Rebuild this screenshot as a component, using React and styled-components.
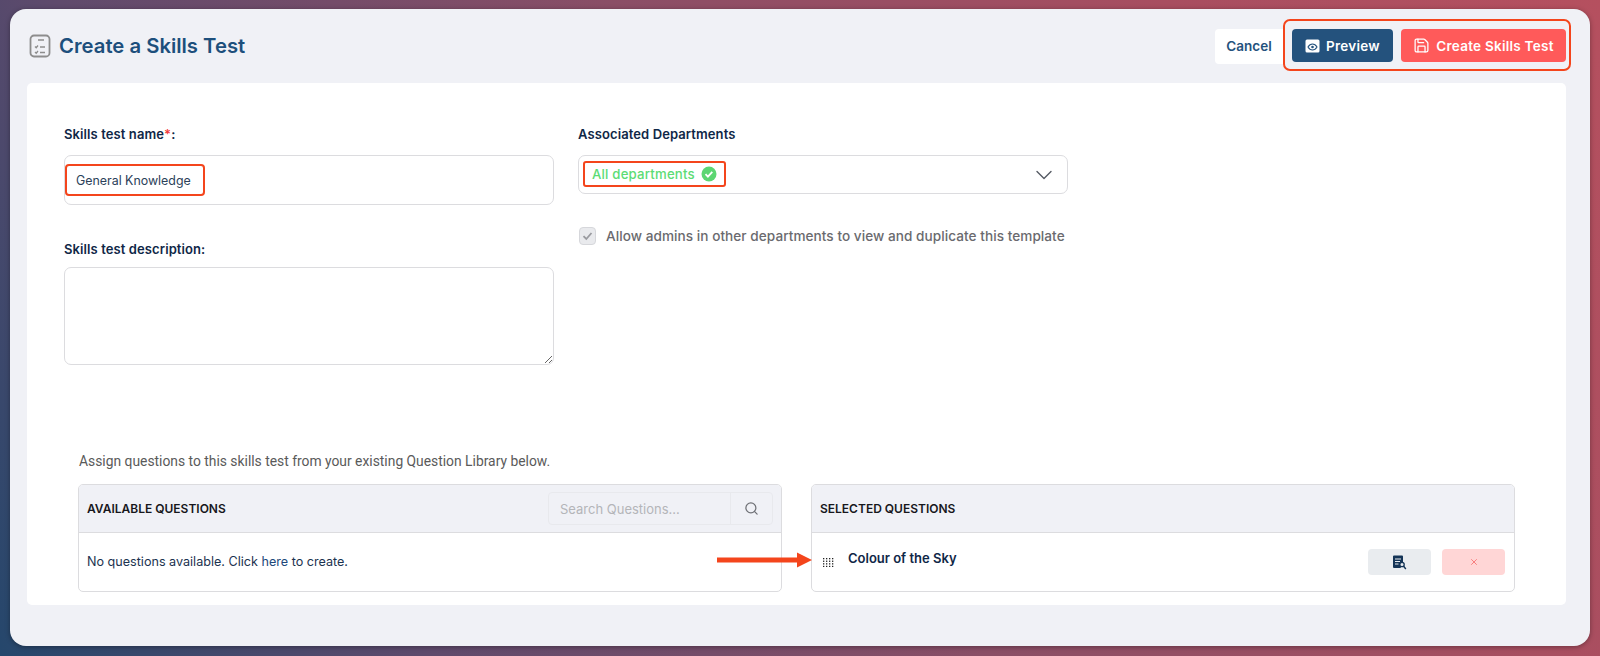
import React from "react";
import styled, { createGlobalStyle } from "styled-components";
import { ChevronDown, Save, Search, X } from "lucide-react";

const GlobalStyle = createGlobalStyle`
  html, body {
    margin: 0;
    padding: 0;
    background: #3a4669;
  }
  * {
    box-sizing: border-box;
  }
`;

const font = `Inter, "Liberation Sans", sans-serif`;
const navy = "#0f2747";
const red = "#f4451c";

// Page frame

const Backdrop = styled.div`
  position: relative;
  width: 1600px;
  height: 656px;
  padding: 9px 10px 10px 10px;
  overflow: hidden;
  font-family: ${font};
  background: linear-gradient(60deg, #25476c 0%, #5f4a6c 22%, #8a4e66 50%, #a84e60 78%, #b5505f 100%);
`;

const Window = styled.div`
  display: flex;
  flex-direction: column;
  height: 637px;
  background: #f0f1f6;
  border-radius: 16px;
  box-shadow: 0 1px 5px rgba(0, 0, 0, 0.35);
`;

// Header

const Header = styled.header`
  display: flex;
  align-items: center;
  justify-content: space-between;
  height: 74px;
  padding: 0 19px 0 19px;
`;

const TitleGroup = styled.div`
  display: flex;
  align-items: center;
  gap: 8px;
`;

const Title = styled.h1`
  margin: -2px 0 0 0;
  font-size: 20.3px;
  font-weight: 600;
  color: #1d4f7c;
`;

const Actions = styled.div`
  display: flex;
  align-items: center;
`;

const CancelButton = styled.button`
  width: 68px;
  height: 35px;
  padding: 0;
  border: 0;
  border-radius: 4px 0 0 4px;
  background: #fff;
  color: #24527d;
  font: 600 13.5px ${font};
`;

const ActionsHighlight = styled.div`
  position: relative;
  display: flex;
  gap: 8px;
  margin-top: -3px;
  padding: 8.5px 3px 6.5px 7px;
  border: 2.5px solid ${red};
  border-radius: 7px;
`;

const ActionButton = styled.button`
  display: flex;
  align-items: center;
  justify-content: center;
  gap: 6px;
  width: ${(p) => p.$width}px;
  height: 33px;
  padding: 0;
  border: 0;
  border-radius: 4px;
  background: ${(p) => p.$bg};
  color: #fff;
  font: 600 13.5px ${font};
  letter-spacing: 0.25px;
`;

// Main panel

const Panel = styled.main`
  display: flex;
  flex-direction: column;
  height: 522px;
  margin: 0 24px 0 17px;
  padding: 42px 0 0 0;
  background: #fff;
  border-radius: 5px;
`;

const FormGrid = styled.div`
  display: grid;
  grid-template-columns: 490px 490px;
  column-gap: 24px;
  height: 330px;
  padding-left: 37px;
`;

const Column = styled.div`
  display: flex;
  flex-direction: column;
`;

const Label = styled.label`
  height: 18px;
  margin-top: ${(p) => p.$top || 0}px;
  margin-bottom: ${(p) => p.$bottom || 12}px;
  color: ${navy};
  font-size: 13px;
  font-weight: 600;
  line-height: 18px;
  letter-spacing: 0.1px;
`;

const Required = styled.span`
  color: #f23b3b;
`;

const InputShell = styled.div`
  display: flex;
  align-items: center;
  height: 50px;
  border: 1px solid #dcdcdf;
  border-radius: 7px;
`;

const NameHighlight = styled.div`
  display: flex;
  align-items: center;
  height: 32px;
  width: 140px;
  padding-left: 9px;
  border: 2.5px solid ${red};
  border-radius: 4px;
  color: #2b4159;
  font-size: 12.4px;
`;

const DescriptionArea = styled.textarea`
  display: block;
  width: 100%;
  height: 98px;
  margin: 0;
  border: 1px solid #dcdcdf;
  border-radius: 7px;
  outline: none;
`;

const SelectShell = styled.div`
  display: flex;
  align-items: center;
  justify-content: space-between;
  height: 39px;
  padding: 0 9px 0 4px;
  border: 1px solid #dcdcdf;
  border-radius: 7px;
  color: #555a63;
`;

const DepartmentHighlight = styled.div`
  display: flex;
  align-items: center;
  gap: 6px;
  width: 143px;
  height: 26px;
  margin-top: -2px;
  padding-left: 7px;
  border: 2.5px solid ${red};
  border-radius: 3px;
  color: #5cdc75;
  font-size: 13.2px;
  font-weight: 500;
  letter-spacing: 0.2px;
`;

const CheckRow = styled.div`
  display: flex;
  align-items: center;
  gap: 10px;
  margin: 33px 0 0 1px;
  color: #6a6a6e;
  font-size: 13.6px;
  font-weight: 500;
  letter-spacing: 0.05px;
  white-space: nowrap;
`;

const CheckBox = styled.span`
  display: flex;
  align-items: center;
  justify-content: center;
  width: 17px;
  height: 18px;
  background: #e9eaed;
  border: 1px solid #d6d7db;
  border-radius: 4px;
`;

// Question lists

const QuestionSection = styled.section`
  padding: 0 50px 0 51px;
`;

const AssignText = styled.p`
  margin: -1px 0 15px 1px;
  color: #5a5a5a;
  font-family: Roboto, "Liberation Sans", sans-serif;
  font-size: 13.85px;
  line-height: 15px;
`;

const ListsGrid = styled.div`
  display: grid;
  grid-template-columns: 704px 704px;
  column-gap: 29px;
`;

const ListCard = styled.div`
  height: 108px;
  border: 1px solid #dcdcdf;
  border-radius: 5px;
  overflow: hidden;
`;

const ListHeader = styled.div`
  display: flex;
  align-items: center;
  justify-content: space-between;
  height: 48px;
  padding: 0 8px;
  background: #f0f1f6;
  border-bottom: 1px solid #dcdcdf;
`;

const ListTitle = styled.h2`
  margin: 0;
  color: #17171c;
  font-size: 12px;
  font-weight: 600;
`;

const SearchBox = styled.div`
  display: flex;
  width: 225px;
  height: 33px;
  border: 1px solid #e8e9ed;
  border-radius: 4px;
`;

const SearchField = styled.div`
  flex: 1;
  display: flex;
  align-items: center;
  padding-left: 11px;
  border-right: 1px solid #e8e9ed;
  color: #b4b5b9;
  font-size: 13px;
`;

const SearchIcon = styled.div`
  display: flex;
  align-items: center;
  justify-content: center;
  width: 41px;
  color: #6f7176;
`;

const EmptyMessage = styled.p`
  margin: 0;
  padding: 20px 8px 0 8px;
  color: #1c3350;
  font-size: 12.6px;
  line-height: 18px;
`;

const HereLink = styled.a`
  color: #20487a;
`;

const QuestionRow = styled.div`
  display: flex;
  align-items: center;
  height: 59px;
  padding: 0 9px 1px 11px;
`;

const QuestionName = styled.span`
  flex: 1;
  margin-left: 14px;
  margin-top: -8px;
  color: ${navy};
  font-size: 13px;
  font-weight: 600;
`;

const RowButton = styled.button`
  display: flex;
  align-items: center;
  justify-content: center;
  width: 63px;
  height: 26px;
  margin-left: ${(p) => p.$left || 0}px;
  padding: 0;
  border: 0;
  border-radius: 4px;
  background: ${(p) => p.$bg};
  color: #f76d6d;
`;

const Arrow = styled.svg`
  position: absolute;
  left: 716px;
  top: 550px;
`;

// Icons

const TestIcon = () => (
  <svg width="22" height="24" viewBox="0 0 22 24" fill="none" stroke="#8d8d8d">
    <rect x="1.5" y="1.5" width="19" height="21" rx="3.5" strokeWidth="1.8" />
    <path d="M9 6h6M6 12.5l1.2 1.2L9 11.5M11 13h5M6 18l1.2 1.2L9 17M11 18.5h5" strokeWidth="1.3" />
  </svg>
);

const EyeBoxIcon = () => (
  <svg width="15" height="14" viewBox="0 0 15 14">
    <rect x="0.5" y="0.5" width="14" height="13" rx="1.5" fill="#fff" />
    <path d="M3 8c1.2-2 2.7-3 4.5-3s3.3 1 4.5 3c-1.2 2-2.7 3-4.5 3S4.2 10 3 8z" fill="none" stroke="#24527d" strokeWidth="1.1" />
    <circle cx="7.5" cy="8" r="1.3" fill="#24527d" />
  </svg>
);

const GreenCheck = () => (
  <svg width="16" height="16" viewBox="0 0 16 16">
    <circle cx="8" cy="8" r="7.5" fill="#5cd672" />
    <path d="M4.5 8.2l2.4 2.4 4.4-4.8" fill="none" stroke="#fff" strokeWidth="1.8" />
  </svg>
);

const SmallCheck = () => (
  <svg width="11" height="10" viewBox="0 0 11 10">
    <path d="M1.5 5.2l2.8 2.8 5.2-6" fill="none" stroke="#9a9ba0" strokeWidth="1.8" />
  </svg>
);

const DragDots = () => (
  <svg width="11" height="9" viewBox="0 0 11 9" fill="#222">
    {[0, 1, 2, 3].map((col) =>
      [0, 1, 2, 3].map((row) => (
        <rect key={`${col}-${row}`} x={col * 3} y={row * 2.6} width="1.3" height="1.3" />
      ))
    )}
  </svg>
);

const DocSearchIcon = () => (
  <svg width="15" height="15" viewBox="0 0 15 15">
    <path d="M1 1.5a1 1 0 0 1 1-1h8a1 1 0 0 1 1 1v5.5L8 11l1 2H2a1 1 0 0 1-1-1z" fill="#143456" />
    <path d="M3 4h6M3 6.5h5M3 9h3.5" stroke="#e9ecef" strokeWidth="1" />
    <circle cx="10" cy="9.5" r="2.2" fill="#e9ecef" stroke="#143456" strokeWidth="1.3" />
    <path d="M11.5 11l2.3 3" stroke="#143456" strokeWidth="1.4" />
  </svg>
);

const App = () => {
  return (
    <Backdrop>
      <GlobalStyle />
      <Window>
        <Header>
          <TitleGroup>
            <TestIcon />
            <Title>Create a Skills Test</Title>
          </TitleGroup>
          <Actions>
            <CancelButton>Cancel</CancelButton>
            <ActionsHighlight>
              <ActionButton $width={101} $bg="#24527d">
                <EyeBoxIcon />
                Preview
              </ActionButton>
              <ActionButton $width={165} $bg="#ff5a5a">
                <Save size={17} strokeWidth={1.8} />
                Create Skills Test
              </ActionButton>
            </ActionsHighlight>
          </Actions>
        </Header>
        <Panel>
          <FormGrid>
            <Column>
              <Label>
                Skills test name<Required>*</Required>:
              </Label>
              <InputShell>
                <NameHighlight>General Knowledge</NameHighlight>
              </InputShell>
              <Label $top={35} $bottom={9}>
                Skills test description:
              </Label>
              <DescriptionArea aria-label="Skills test description" />
            </Column>
            <Column>
              <Label>Associated Departments</Label>
              <SelectShell>
                <DepartmentHighlight>
                  All departments
                  <GreenCheck />
                </DepartmentHighlight>
                <ChevronDown size={28} strokeWidth={1.2} />
              </SelectShell>
              <CheckRow>
                <CheckBox>
                  <SmallCheck />
                </CheckBox>
                Allow admins in other departments to view and duplicate this template
              </CheckRow>
            </Column>
          </FormGrid>
          <QuestionSection>
            <AssignText>
              Assign questions to this skills test from your existing Question Library below.
            </AssignText>
            <ListsGrid>
              <ListCard>
                <ListHeader>
                  <ListTitle>AVAILABLE QUESTIONS</ListTitle>
                  <SearchBox>
                    <SearchField>Search Questions...</SearchField>
                    <SearchIcon>
                      <Search size={15} strokeWidth={2} />
                    </SearchIcon>
                  </SearchBox>
                </ListHeader>
                <EmptyMessage>
                  No questions available. Click <HereLink>here</HereLink> to create.
                </EmptyMessage>
              </ListCard>
              <ListCard>
                <ListHeader>
                  <ListTitle>SELECTED QUESTIONS</ListTitle>
                </ListHeader>
                <QuestionRow>
                  <DragDots />
                  <QuestionName>Colour of the Sky</QuestionName>
                  <RowButton $bg="#e9ecef">
                    <DocSearchIcon />
                  </RowButton>
                  <RowButton $bg="#ffd6d6" $left={11}>
                    <X size={10} strokeWidth={2} />
                  </RowButton>
                </QuestionRow>
              </ListCard>
            </ListsGrid>
          </QuestionSection>
        </Panel>
      </Window>
      <Arrow width="98" height="20" viewBox="0 0 98 20">
        <path d="M1 7.5h80V2.500L96 10l-15 7.500v-5H1z" fill={red} />
      </Arrow>
    </Backdrop>
  );
};

export default App;
